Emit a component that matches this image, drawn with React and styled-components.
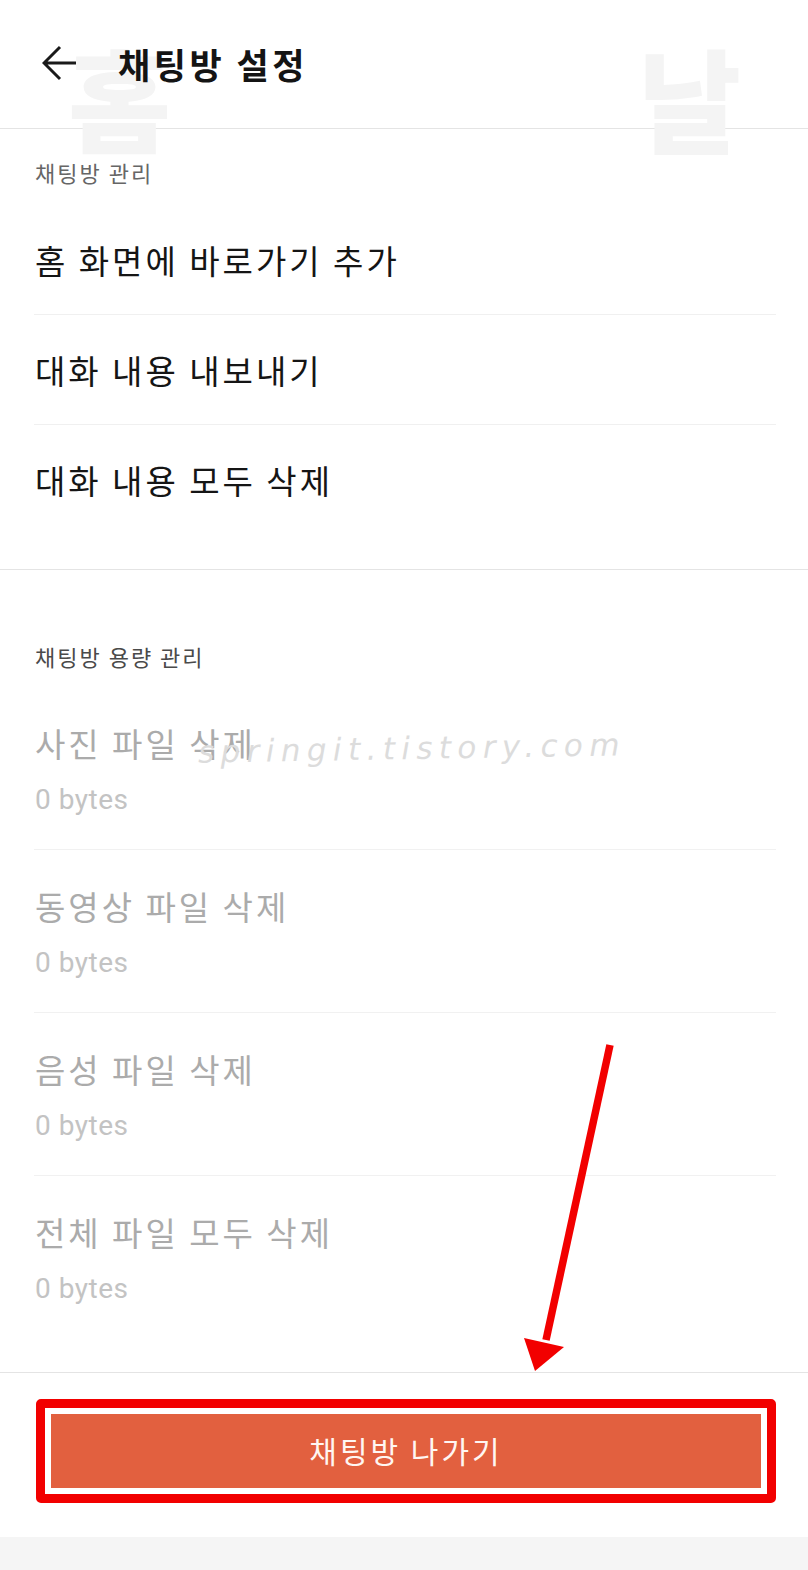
import React from "react";
import styled, { createGlobalStyle } from "styled-components";

const GlobalStyle = createGlobalStyle`
  html, body { margin: 0; padding: 0; background: #ffffff; }
  body { font-family: "Noto Sans CJK KR", "Noto Sans", sans-serif; }
  * { box-sizing: border-box; }
`;

const Page = styled.div`
  position: relative;
  width: 808px;
  height: 1570px;
  overflow: hidden;
  display: flex;
  flex-direction: column;
  background: #ffffff;
`;

const Header = styled.header`
  position: relative;
  height: 129px;
  flex: none;
  display: flex;
  align-items: center;
  padding: 0 0 2px 42px;
  border-bottom: 1px solid #e4e4e4;
`;

const Watermark = styled.span`
  position: absolute;
  left: ${(p) => p.$left}px;
  top: ${(p) => p.$top}px;
  font-family: "Noto Sans CJK KR", sans-serif;
  font-weight: 900;
  font-size: 112px;
  line-height: 1;
  color: #f4f4f4;
  pointer-events: none;
  user-select: none;
`;

const BackButton = styled.button`
  position: relative;
  z-index: 1;
  display: flex;
  align-items: center;
  justify-content: center;
  width: 36px;
  height: 36px;
  padding: 0;
  border: none;
  background: none;
  color: #1a1a1a;
`;

const Title = styled.h1`
  position: relative;
  z-index: 1;
  margin: 0 0 0 40px;
  font-size: 35px;
  font-weight: 700;
  color: #141414;
  letter-spacing: 3.5px;
`;

const Section = styled.section`
  flex: none;
  padding-bottom: ${(p) => p.$bottom}px;
  border-bottom: 1px solid #e4e4e4;
`;

const SectionLabel = styled.div`
  padding: ${(p) => p.$top}px 35px ${(p) => p.$below}px;
  font-size: 22px;
  line-height: 30px;
  letter-spacing: 2px;
  color: ${(p) => p.$color};
`;

const MenuRow = styled.div`
  height: 110px;
  margin: 0 32px 0 34px;
  padding-left: 1px;
  display: flex;
  align-items: center;
  font-size: 33px;
  letter-spacing: 3px;
  color: #151515;
  border-bottom: 1px solid ${(p) => (p.$last ? "transparent" : "#f0f0f0")};
`;

const StorageRow = styled.div`
  height: 163px;
  margin: 0 32px 0 34px;
  padding: 34px 0 0 1px;
  display: flex;
  flex-direction: column;
  border-bottom: 1px solid ${(p) => (p.$last ? "transparent" : "#f1f1f1")};
`;

const RowTitle = styled.div`
  font-size: 33px;
  line-height: 44px;
  letter-spacing: 3px;
  color: #ababab;
`;

const RowSub = styled.div`
  margin-top: 18px;
  font-family: Roboto, "Noto Sans", sans-serif;
  font-size: 28px;
  line-height: 34px;
  letter-spacing: 0.5px;
  color: #c3c3c3;
`;

const Footer = styled.div`
  flex: none;
  padding: 26px 32px 34px 36px;
`;

const Highlight = styled.div`
  border: 9px solid #f20000;
  border-radius: 5px;
  padding: 6px;
  background: #ffffff;
`;

const ExitButton = styled.button`
  width: 100%;
  height: 74px;
  border: none;
  background: #e2603f;
  color: #fff6f2;
  font-family: "Noto Sans CJK KR", sans-serif;
  font-size: 30px;
  letter-spacing: 3px;
  display: flex;
  align-items: center;
  justify-content: center;
  padding: 0 0 2px;
`;

const BottomBar = styled.div`
  flex: 1;
  background: #f5f5f5;
`;

const SiteMark = styled.span`
  position: absolute;
  left: 198px;
  top: 730px;
  font-family: "DejaVu Sans", sans-serif;
  font-style: italic;
  font-weight: 200;
  font-size: 31px;
  letter-spacing: 6.4px;
  color: #dcdcdc;
  transform: rotate(-1deg);
  pointer-events: none;
`;

const Overlay = styled.svg`
  position: absolute;
  left: 0;
  top: 0;
  pointer-events: none;
`;

const menuItems = ["홈 화면에 바로가기 추가", "대화 내용 내보내기", "대화 내용 모두 삭제"];
const storageItems = ["사진 파일 삭제", "동영상 파일 삭제", "음성 파일 삭제", "전체 파일 모두 삭제"];

export default function App() {
  return (
    <>
      <GlobalStyle />
      <Page>
        <Header>
          <Watermark $left={68} $top={40}>홈</Watermark>
          <Watermark $left={638} $top={40}>날</Watermark>
          <BackButton aria-label="뒤로">
            <svg width="36" height="36" viewBox="0 0 36 36" fill="none">
              <path d="M34 18H3M18 2L2 18L18 34" stroke="currentColor" strokeWidth="3" />
            </svg>
          </BackButton>
          <Title>채팅방 설정</Title>
        </Header>

        <Section $bottom={34}>
          <SectionLabel $top={28} $below={18} $color="#666666">채팅방 관리</SectionLabel>
          {menuItems.map((t, i) => (
            <MenuRow key={t} $last={i === menuItems.length - 1}>{t}</MenuRow>
          ))}
        </Section>

        <Section $bottom={33}>
          <SectionLabel $top={71} $below={16} $color="#4a4a4a">채팅방 용량 관리</SectionLabel>
          {storageItems.map((t, i) => (
            <StorageRow key={t} $last={i === storageItems.length - 1}>
              <RowTitle>{t}</RowTitle>
              <RowSub>0 bytes</RowSub>
            </StorageRow>
          ))}
        </Section>

        <Footer>
          <Highlight>
            <ExitButton>채팅방 나가기</ExitButton>
          </Highlight>
        </Footer>
        <BottomBar />

        <SiteMark>springit.tistory.com</SiteMark>

        <Overlay width="808" height="1570" viewBox="0 0 808 1570">
          <line x1="610" y1="1045" x2="546" y2="1340" stroke="#f20000" strokeWidth="7.5" />
          <polygon points="524,1338 564,1347 535,1371" fill="#f20000" />
        </Overlay>
      </Page>
    </>
  );
}
